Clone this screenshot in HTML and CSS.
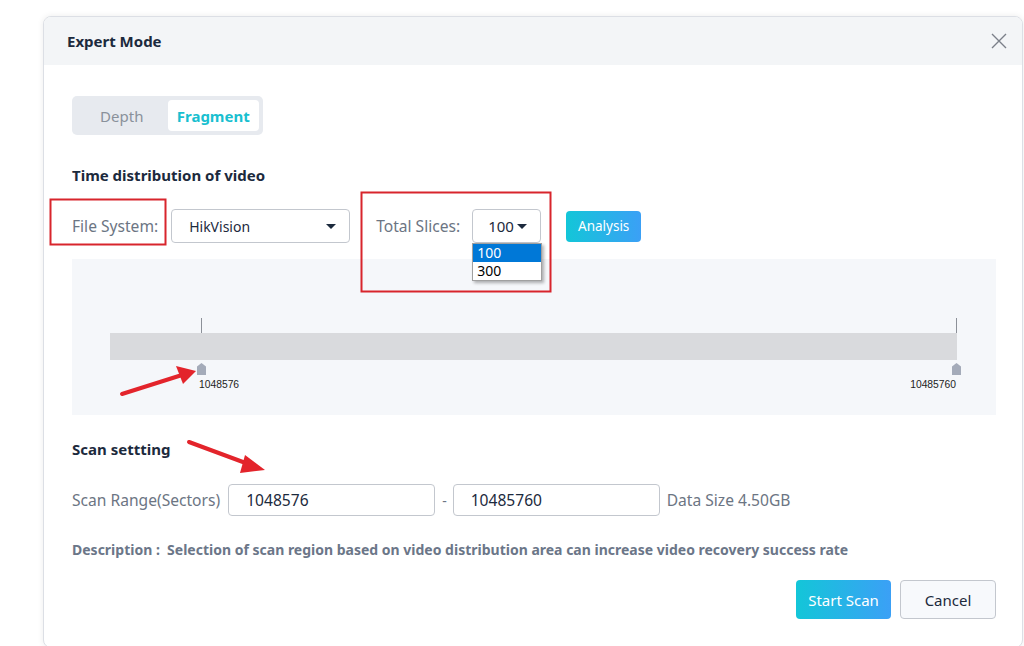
FILE: index.html
```html
<!DOCTYPE html>
<html lang="en">
<head>
    <meta charset="UTF-8">
    <link rel="stylesheet" href="styles.css">
</head>
<body>
    <div class="dialog">
        <div class="dialog-header">
            <h1 class="dialog-title">Expert Mode</h1>
            <span class="close-btn">
                <svg width="16" height="16" viewBox="0 0 16 16"><path d="M1 1L15 15M15 1L1 15" stroke="#7b8089" stroke-width="1.4" fill="none"/></svg>
            </span>
        </div>

        <div class="dialog-body">
            <!-- モード切替 -->
            <div class="tabs">
                <div class="tab">Depth</div>
                <div class="tab active">Fragment</div>
            </div>

            <h2 class="section-title">Time distribution of video</h2>
            <div class="filter-row">
                <span class="field-label">File System:</span>
                <div class="select select-fs">
                    <span>HikVision</span>
                    <i class="caret"></i>
                </div>
                <span class="field-label slices-label">Total Slices:</span>
                <div class="select select-slices">
                    <span>100</span>
                    <i class="caret"></i>
                    <ul class="dropdown">
                        <li class="selected">100</li>
                        <li>300</li>
                    </ul>
                </div>
                <button class="btn-primary btn-small">Analysis</button>
            </div>

            <!-- 分布グラフ -->
            <div class="chart-panel">
                <div class="track">
                    <span class="tick" style="left: 91px"></span>
                    <span class="tick" style="left: 846px"></span>
                    <div class="bar"></div>
                    <div class="marker" style="left: 87px"><i></i><span>1048576</span></div>
                    <div class="marker marker-end" style="left: 842px"><i></i><span>10485760</span></div>
                </div>
            </div>

            <h2 class="section-title scan-title">Scan settting</h2>
            <div class="range-row">
                <span class="field-label">Scan Range(Sectors)</span>
                <input class="text-input" type="text" value="1048576">
                <span class="dash">-</span>
                <input class="text-input" type="text" value="10485760">
                <span class="field-label">Data Size 4.50GB</span>
            </div>

            <p class="description">Description :&nbsp; Selection of scan region based on video distribution area can increase video recovery success rate</p>

            <div class="footer">
                <button class="btn-primary btn-large">Start Scan</button>
                <button class="btn-default">Cancel</button>
            </div>
        </div>
    </div>

    <!-- 注釈（赤枠・矢印） -->
    <svg class="annotations" width="1024" height="646" viewBox="0 0 1024 646">
        <rect x="50.5" y="199.5" width="115" height="45" fill="none" stroke="#d8252c" stroke-width="2"/>
        <rect x="361.5" y="192.5" width="189" height="99" fill="none" stroke="#d8252c" stroke-width="2"/>
        <path d="M122 394L182 375" stroke="#e3242b" stroke-width="4" stroke-linecap="round"/>
        <path d="M196 371L176 366L183 384Z" fill="#e3242b"/>
        <path d="M189 442L251 465" stroke="#e3242b" stroke-width="4" stroke-linecap="round"/>
        <path d="M265 470L245 455L240 473Z" fill="#e3242b"/>
    </svg>
</body>
</html>
```

FILE: styles.css
```css
* {
    box-sizing: border-box;
    margin: 0;
    padding: 0;
}

body {
    background: #fff;
    color: #1e2c3e;
    font-family: "Noto Sans", "Open Sans", sans-serif;
    width: 1024px;
    height: 646px;
    overflow: hidden;
    position: relative;
}

.dialog {
    margin: 16px 0 0 43px;
    width: 980px;
    height: 632px;
    border: 1px solid #dcdfe5;
    border-radius: 8px;
    box-shadow: 0 0 6px rgba(0,0,0,0.08);
    overflow: hidden;
    background: #fff;
}

.dialog-header {
    display: flex;
    align-items: center;
    justify-content: space-between;
    height: 48px;
    padding: 0 15px 0 23px;
    background: #f3f5f7;
}

.dialog-title {
    font-size: 15px;
    font-weight: bold;
    color: #1c2a3d;
}

.close-btn {
    display: flex;
    width: 16px;
    height: 16px;
}

.dialog-body {
    position: relative;
    padding: 31px 26px 0 28px;
}

/* タブ */
.tabs {
    display: inline-flex;
    width: 191px;
    height: 39px;
    padding: 4px;
    background: #e7eaef;
    border-radius: 5px;
}

.tab {
    flex: 1;
    display: flex;
    align-items: center;
    justify-content: center;
    font-size: 15px;
    color: #8a919b;
    border-radius: 4px;
}

.tab.active {
    background: #fff;
    color: #19bfd0;
    font-weight: bold;
}

.section-title {
    margin-top: 30px;
    font-size: 15px;
    line-height: 20px;
    font-weight: bold;
    color: #1c2a3d;
}

.field-label {
    font-size: 15.6px;
    color: #6c7583;
    white-space: nowrap;
}

/* フィルター行 */
.filter-row {
    display: flex;
    align-items: center;
    height: 34px;
    margin-top: 24px;
}

.select {
    position: relative;
    display: flex;
    align-items: center;
    justify-content: space-between;
    height: 34px;
    border: 1px solid #c3c7ce;
    border-radius: 4px;
    background: #fff;
    font-size: 14px;
    color: #1c2a3d;
}

.select-fs {
    width: 179px;
    margin-left: 13px;
    padding: 0 13px 0 17px;
}

.slices-label {
    margin-left: 26px;
}

.select-slices {
    width: 69px;
    margin-left: 12px;
    padding: 0 13px 0 15px;
    font-size: 15px;
}

.caret {
    width: 0;
    height: 0;
    border-left: 5px solid transparent;
    border-right: 5px solid transparent;
    border-top: 5px solid #1c2a3d;
}

.dropdown {
    position: absolute;
    top: 33px;
    left: -1px;
    width: 70px;
    list-style: none;
    background: #fff;
    border: 1px solid #a0a0a0;
    box-shadow: 2px 2px 3px rgba(0,0,0,0.3);
    z-index: 2;
}

.dropdown li {
    height: 18px;
    line-height: 18px;
    padding-left: 4px;
    font-size: 14px;
    color: #000;
}

.dropdown li.selected {
    background: #0078d7;
    color: #fff;
}

.btn-primary {
    border: none;
    border-radius: 4px;
    background: linear-gradient(90deg, #13c6d8, #3ba0f6);
    color: #fff;
    font-family: inherit;
}

.btn-small {
    width: 75px;
    height: 31px;
    margin-left: 25px;
    font-size: 13.5px;
}

/* グラフ */
.chart-panel {
    height: 156px;
    margin-top: 16px;
    background: #f5f7fa;
    padding: 59px 39px 0 38px;
}

.track {
    position: relative;
    height: 80px;
}

.tick {
    position: absolute;
    top: 0;
    width: 1px;
    height: 15px;
    background: #8c9098;
}

.bar {
    position: absolute;
    top: 15px;
    left: 0;
    right: 0;
    height: 27px;
    background: #d9dadd;
}

.marker {
    position: absolute;
    top: 45px;
    width: 9px;
}

.marker i {
    display: block;
    width: 9px;
    height: 12px;
    background: #a4abb9;
    clip-path: polygon(0 30%, 50% 0, 100% 30%, 100% 100%, 0 100%);
}

.marker span {
    position: absolute;
    top: 16px;
    left: 2px;
    font-size: 10.3px;
    color: #222;
    font-family: "Liberation Sans", sans-serif;
}

.marker-end span {
    left: auto;
    right: 5px;
}

.scan-title {
    margin-top: 24px;
}

/* 範囲入力 */
.range-row {
    display: flex;
    align-items: center;
    height: 32px;
    margin-top: 25px;
}

.text-input {
    width: 207px;
    height: 32px;
    margin-left: 8px;
    padding: 0 17px;
    border: 1px solid #c3c7ce;
    border-radius: 4px;
    font-family: inherit;
    font-size: 15.6px;
    color: #1c2a3d;
}

.dash {
    margin-left: 7px;
    color: #6c7583;
    font-size: 14px;
}

.dash + .text-input {
    margin-left: 6px;
}

.range-row .text-input + .field-label {
    margin-left: 7px;
}

.description {
    margin-top: 24px;
    font-size: 14px;
    line-height: 20px;
    font-weight: bold;
    color: #6b7688;
}

.footer {
    display: flex;
    justify-content: flex-end;
    gap: 9px;
    margin-top: 20px;
}

.btn-large {
    width: 95px;
    height: 39px;
    font-size: 15px;
}

.btn-default {
    width: 96px;
    height: 39px;
    border: 1px solid #c3c7ce;
    border-radius: 4px;
    background: #f7f9fc;
    color: #1c2a3d;
    font-family: inherit;
    font-size: 15px;
}

.annotations {
    position: absolute;
    top: 0;
    left: 0;
    pointer-events: none;
}
```
